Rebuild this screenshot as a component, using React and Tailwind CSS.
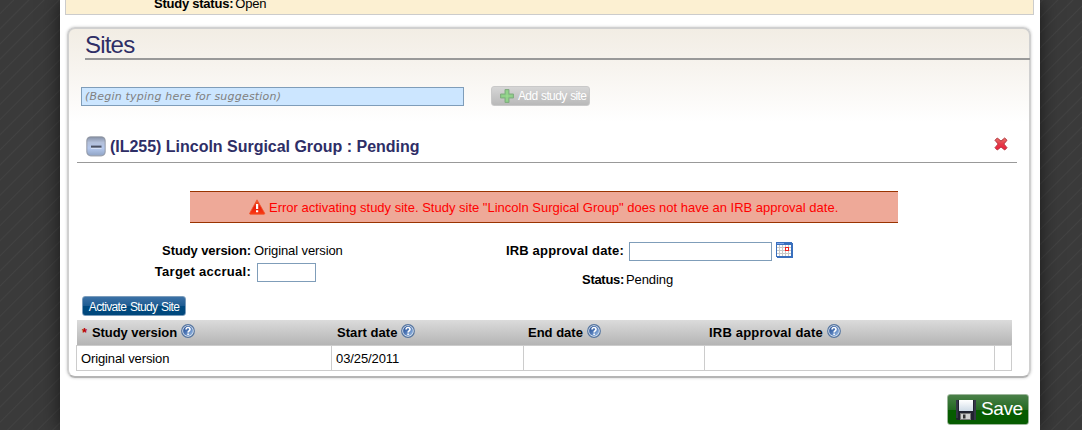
import React from "react";

function HelpIcon() {
  return (
    <svg width="14" height="14" viewBox="0 0 14 14" className="block shrink-0">
      <defs>
        <linearGradient id="help" x1="0" y1="0" x2="1" y2="1">
          <stop offset="0" stopColor="#1f4a90" />
          <stop offset=".45" stopColor="#4d76b5" />
          <stop offset="1" stopColor="#a3c4ea" />
        </linearGradient>
      </defs>
      <circle cx="7" cy="7" r="6.3" fill="#e4ebf4" stroke="#54749f" strokeWidth="1.2" />
      <circle cx="7" cy="7" r="4.9" fill="url(#help)" />
      <path d="M5 5.6c0-2.8 4-2.6 4-.2 0 1.4-1.9 1.5-1.9 3M7.1 9.4v1.5" fill="none" stroke="#fff" strokeWidth="1.6" />
    </svg>
  );
}

function MinusIcon() {
  return (
    <svg width="20" height="21" viewBox="0 0 20 21" className="block shrink-0">
      <defs>
        <linearGradient id="minus" x1="0" y1="0" x2="0" y2="1">
          <stop offset="0" stopColor="#8590a6" />
          <stop offset=".3" stopColor="#b3c0da" />
          <stop offset=".6" stopColor="#b4c8ed" />
          <stop offset="1" stopColor="#8fa3c4" />
        </linearGradient>
      </defs>
      <rect x=".8" y=".8" width="18.4" height="19" rx="4" fill="url(#minus)" stroke="#8c929d" strokeOpacity=".75" strokeWidth="1.2" />
      <rect x="5" y="9.6" width="10.5" height="2.2" fill="#4b5262" />
      <rect x="5" y="11.8" width="10.5" height="1" fill="#dce6f8" />
    </svg>
  );
}

function RemoveIcon() {
  return (
    <svg width="14" height="14" viewBox="0 0 14 14" className="block shrink-0">
      <defs>
        <linearGradient id="remove" x1="0" y1="0" x2="0" y2="1">
          <stop offset="0" stopColor="#e8746c" />
          <stop offset=".5" stopColor="#e63a48" />
          <stop offset="1" stopColor="#f01f3c" />
        </linearGradient>
      </defs>
      <path d="M3.3 1 1 3.3 4.2 7 1 10.7 3.3 13 7 9.9 10.7 13 13 10.7 9.8 7 13 3.3 10.7 1 7 4.1Z" fill="url(#remove)" stroke="#b3333c" strokeWidth="1" strokeLinejoin="round" />
    </svg>
  );
}

function WarningIcon() {
  return (
    <svg width="17" height="16" viewBox="0 0 17 16" className="block shrink-0">
      <defs>
        <linearGradient id="warn" x1="0" y1="0" x2="0" y2="1">
          <stop offset="0" stopColor="#f4672d" />
          <stop offset=".5" stopColor="#e8200c" />
          <stop offset="1" stopColor="#fb3a12" />
        </linearGradient>
      </defs>
      <path d="M8 .8 15.7 14.3Q15.9 15.2 15 15.2H1.2Q.4 15.2.7 14.3Z" fill="url(#warn)" stroke="#f0522a" strokeWidth=".8" />
      <path d="M7 5h2.2v5H7zM7 11.2h2.2v2H7z" fill="#fff" />
    </svg>
  );
}

function PlusIcon() {
  return (
    <svg width="14" height="14" viewBox="0 0 14 14" className="block shrink-0">
      <path d="M5 .5h4V5h4.5v4H9v4.5H5V9H.5V5H5Z" fill="#86c685" stroke="#83ad81" />
      <path d="M7 1.5v11M1.5 7h11" stroke="#9bdc8e" strokeWidth="1.2" />
    </svg>
  );
}

function CalendarIcon() {
  return (
    <svg width="17" height="16" viewBox="0 0 17 16" shapeRendering="crispEdges" className="block shrink-0">
      <path d="M0 0h16v1h1v15H1v-1H0Z" fill="#3a70bd" />
      <path d="M1 1h7v1H1z" fill="#82a8ea" />
      <path d="M1 3h14v11H1z" fill="#fff" />
      <path d="M3 3h1v11H3zM6 3h1v11H6zM9 3h1v11H9zM12 3h1v11h-1zM1 5h14v1H1zM1 8h14v1H1zM1 11h14v1H1z" fill="#c9c9c9" />
      <rect x="9" y="5" width="4" height="4" fill="#f02020" />
      <rect x="10" y="6" width="2" height="2" fill="#fff" />
    </svg>
  );
}

function SaveIcon() {
  return (
    <svg width="20" height="20" viewBox="0 0 20 20" className="block shrink-0">
      <defs>
        <linearGradient id="label" x1="0" y1="0" x2="0" y2="1">
          <stop offset="0" stopColor="#fff" />
          <stop offset="1" stopColor="#cfdbe7" />
        </linearGradient>
      </defs>
      <path d="M0 0h20v20H1l-1-1Z" fill="#20222f" />
      <path d="M0 0h2v18H0zM18 0h2v20h-2z" fill="#353747" />
      <path d="M3 0h14v11H3z" fill="url(#label)" />
      <path d="M4 13h11v7H4z" fill="#777" />
      <path d="M5 14h9v5H5z" fill="#d0d0d0" />
      <path d="M7 14.5h2.5v4H7z" fill="#333" />
    </svg>
  );
}

function HeaderCell({ label, required, className }) {
  return (
    <div className={"flex h-[25px] items-center whitespace-nowrap " + className}>
      {required && <span className="mr-[5px] text-[#b00]">*</span>}
      <span>{label}</span>
      <span className="mb-[4px] ml-[4px]"><HelpIcon /></span>
    </div>
  );
}

function Card() {
  return (
    <section className="ml-[7px] mt-[12px] flex h-[351px] w-[964px] shrink-0 flex-col rounded-[8px] border-2 border-[#d0d0d0] border-b-[#b5b5b5] bg-[linear-gradient(to_bottom,#f2ede4_0px,#f7f4ef_40px,#ffffff_93px)] shadow-[0_0_3px_rgba(0,0,0,0.22)]">
      <h1 className="ml-[16px] mr-[-1px] h-[31px] border-b-2 border-[#999] text-[24px] leading-[32px] tracking-[-0.8px] text-[#2e2e66]">Sites</h1>
      <div className="ml-[12px] mt-[26px] flex h-[20px] items-end">
        <input readOnly placeholder="(Begin typing here for suggestion)" className="h-[19px] w-[383px] border border-[#7f9db9] bg-[#cce6ff] px-[3px] font-['DejaVu_Sans',sans-serif] text-[11px] italic leading-[17px] tracking-[0.21px] outline-none placeholder:text-[#808080] placeholder:opacity-100" />
        <button className="ml-[27px] flex h-[20px] w-[99px] items-center whitespace-nowrap rounded-[3px] border border-[#c9c9c9] bg-gradient-to-b from-[#d6d6d6] to-[#b9b9b9] pl-[8px] text-[12px] tracking-[-0.65px] text-white">
          <PlusIcon /><span className="ml-[4px] [word-spacing:1px]">Add study site</span>
        </button>
      </div>
      <div className="ml-[8px] mt-[24px] flex h-[33px] w-[940px] items-center border-b border-[#999] pl-[9px] pr-[9px]">
        <MinusIcon />
        <h2 className="ml-[4px] mt-[1px] flex-1 whitespace-nowrap text-[16px] font-bold tracking-[-0.02px] text-[#2e2e66]">(IL255) Lincoln Surgical Group : Pending</h2>
        <span className="mb-[4px]"><RemoveIcon /></span>
      </div>
      <div className="ml-[121px] mt-[28px] flex h-[32px] w-[708px] items-center whitespace-nowrap border-y border-[#930] bg-[#eea998] pl-[59px] text-[13px] text-[#f00]">
        <WarningIcon /><span className="ml-[3px] mt-[2px]">Error activating study site. Study site "Lincoln Surgical Group" does not have an IRB approval date.</span>
      </div>
      <div className="mt-[17px] flex h-[56px] whitespace-nowrap">
        <div className="w-[391px]">
          <div className="flex h-[21px] items-center"><b className="w-[182px] text-right tracking-[-0.1px]">Study version:</b><span className="ml-[3px] tracking-[-0.1px]">Original version</span></div>
          <div className="flex h-[21px] items-center"><b className="w-[182px] text-right tracking-[0.26px]">Target accrual:</b><input readOnly className="ml-[6px] mt-[1px] h-[19px] w-[59px] border border-[#7f9db9] bg-white outline-none" /></div>
        </div>
        <div>
          <div className="flex h-[21px] items-center"><b className="w-[164px] text-right tracking-[0.18px]">IRB approval date:</b><input readOnly className="ml-[5px] mt-[2px] h-[19px] w-[143px] border border-[#7f9db9] bg-white outline-none" /><span className="mb-[2px] ml-[4px]"><CalendarIcon /></span></div>
          <div className="mt-[8px] flex h-[21px] items-center"><b className="w-[164px] text-right tracking-[-0.3px]">Status:</b><span className="ml-[2px] tracking-[-0.1px]">Pending</span></div>
        </div>
      </div>
      <button className="ml-[13px] h-[20px] w-[104px] shrink-0 whitespace-nowrap rounded-[3px] border border-[#7b9cbb] bg-[linear-gradient(#3c71a6,#1d5c92_50%,#004a80_51%,#00477b)] text-[12px] leading-[20px] tracking-[-0.65px] text-white [word-spacing:1px]">Activate Study Site</button>
      <div className="ml-[8px] mt-[4px] w-[935px]">
        <div className="flex h-[25px] bg-gradient-to-b from-[#dbdbdb] to-[#b5b5b5] font-bold">
          <HeaderCell label="Study version" required className="w-[255px] pl-[5px] tracking-[-0.07px]" />
          <HeaderCell label="Start date" className="w-[192px] pl-[5px] tracking-[0.05px]" />
          <HeaderCell label="End date" className="w-[181px] pl-[4px]" />
          <HeaderCell label="IRB approval date" className="w-[290px] pl-[4px] tracking-[0.2px]" />
        </div>
        <div className="ml-[-1px] flex h-[26px] border border-[#ccc] bg-white leading-[25px]">
          <div className="w-[254px] pl-[4px] tracking-[-0.13px]">Original version</div>
          <div className="w-[192px] border-l border-[#ccc] pl-[4px] tracking-[-0.1px]">03/25/2011</div>
          <div className="w-[181px] border-l border-[#ccc]" />
          <div className="w-[290px] border-l border-[#ccc]" />
          <div className="flex-1 border-l border-[#ccc]" />
        </div>
      </div>
    </section>
  );
}

export default function App() {
  return (
    <div className="flex h-[430px] w-[1082px] overflow-hidden bg-[repeating-linear-gradient(135deg,#3a3a3a_0px,#3a3a3a_8.7px,#424242_9.7px,#3a3a3a_10.7px)] font-['Liberation_Sans',Arial,sans-serif] text-[13px] text-black">
      <main className="ml-[60px] flex h-[430px] w-[980px] flex-col bg-white shadow-[0_0_18px_rgba(0,0,0,0.6)]">
        <div className="ml-[5px] h-[15px] w-[969px] shrink-0 border-x border-b border-[#ccc] bg-[#fcf0d2] pl-[88px]">
          <div className="mt-[-4px] flex leading-[15px]"><b className="tracking-[-0.24px]">Study status:</b><span className="ml-[2px] tracking-[-0.2px]">Open</span></div>
        </div>
        <Card />
        <button className="ml-[887px] mt-[16px] flex h-[31px] w-[82px] shrink-0 items-center rounded-[3px] border border-[#9db79b] bg-[linear-gradient(#4a8049,#246a22_50%,#065c00_52%,#065c00)] pl-[8px] text-[19px] text-white">
          <SaveIcon /><span className="ml-[5px] tracking-[-0.4px]">Save</span>
        </button>
      </main>
    </div>
  );
}
